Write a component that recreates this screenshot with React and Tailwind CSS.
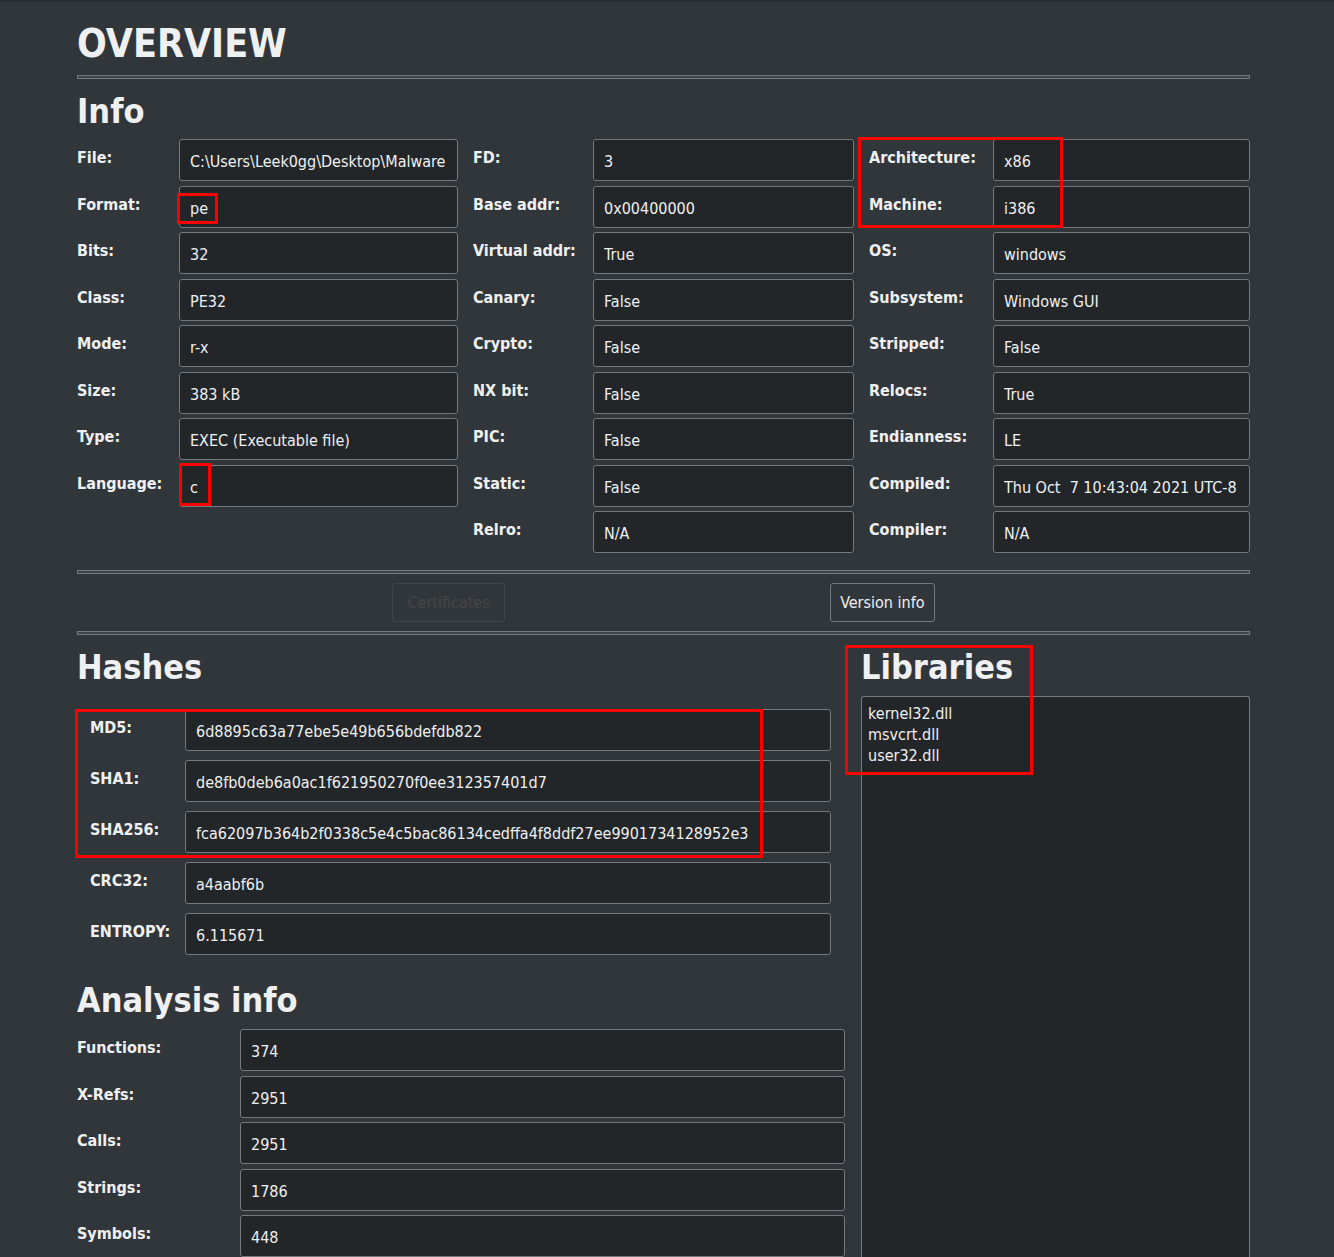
import React, { useId } from "react";

const infoColumns = [
  {
    labelWidth: "w-[102px]",
    rows: [
      ["File:", "C:\\Users\\Leek0gg\\Desktop\\Malware"],
      ["Format:", "pe"],
      ["Bits:", "32"],
      ["Class:", "PE32"],
      ["Mode:", "r-x"],
      ["Size:", "383 kB"],
      ["Type:", "EXEC (Executable file)"],
      ["Language:", "c"],
    ],
  },
  {
    labelWidth: "w-[120px]",
    rows: [
      ["FD:", "3"],
      ["Base addr:", "0x00400000"],
      ["Virtual addr:", "True"],
      ["Canary:", "False"],
      ["Crypto:", "False"],
      ["NX bit:", "False"],
      ["PIC:", "False"],
      ["Static:", "False"],
      ["Relro:", "N/A"],
    ],
  },
  {
    labelWidth: "w-[124px]",
    rows: [
      ["Architecture:", "x86"],
      ["Machine:", "i386"],
      ["OS:", "windows"],
      ["Subsystem:", "Windows GUI"],
      ["Stripped:", "False"],
      ["Relocs:", "True"],
      ["Endianness:", "LE"],
      ["Compiled:", "Thu Oct  7 10:43:04 2021 UTC-8"],
      ["Compiler:", "N/A"],
    ],
  },
];

const hashes = [
  ["MD5:", "6d8895c63a77ebe5e49b656bdefdb822"],
  ["SHA1:", "de8fb0deb6a0ac1f621950270f0ee312357401d7"],
  ["SHA256:", "fca62097b364b2f0338c5e4c5bac86134cedffa4f8ddf27ee9901734128952e3"],
  ["CRC32:", "a4aabf6b"],
  ["ENTROPY:", "6.115671"],
];

const analysis = [
  ["Functions:", "374"],
  ["X-Refs:", "2951"],
  ["Calls:", "2951"],
  ["Strings:", "1786"],
  ["Symbols:", "448"],
];

function Field({ label, value, labelWidth, spacing }) {
  const id = useId();
  return (
    <div className={`flex items-start ${spacing}`}>
      <label htmlFor={id} className={`${labelWidth} shrink-0 pt-[7px] font-bold leading-6 whitespace-nowrap`}>
        {label}
      </label>
      <input
        id={id}
        type="text"
        readOnly
        defaultValue={value}
        className="h-[42px] min-w-0 flex-1 rounded-[3px] border border-[#76797c] bg-[#232629] pt-0.5 pr-2 pl-[10px] outline-none"
      />
    </div>
  );
}

function Rule() {
  return <hr className="h-1 border border-[#76797c] bg-[#3f4449]" />;
}

function Highlight({ className }) {
  return <div aria-hidden="true" className={`pointer-events-none absolute border-3 border-[#fb0000] ${className}`} />;
}

const compact = "not-last:odd:pb-[5px] not-last:even:pb-1";

export default function App() {
  return (
    <main className="min-h-screen border-t-2 border-[#292d31] bg-[#31363b] pr-[84px] pl-[77px] font-['DejaVu_Sans_Condensed','Noto_Sans',sans-serif] text-[16px] text-[#eff0f1]">
      <h1 className="pt-[18px] pb-[7px] text-[39px] leading-[48px] font-bold">OVERVIEW</h1>
      <Rule />

      <h2 className="pt-3 pb-2 text-[34px] leading-10 font-bold">Info</h2>
      <section className="grid grid-cols-3 items-start gap-[15px]">
        {infoColumns.map((column, i) => (
          <div key={i} className="relative">
            <div>
              {column.rows.map(([label, value]) => (
                <Field key={label} label={label} value={value} labelWidth={column.labelWidth} spacing={compact} />
              ))}
            </div>
            {i === 0 && <Highlight className="top-[54px] left-[100px] h-[31px] w-[41px]" />}
            {i === 0 && <Highlight className="top-[324px] left-[102px] h-[43px] w-8" />}
            {i === 2 && <Highlight className="-top-[2px] -left-[11px] h-[91px] w-[205px]" />}
          </div>
        ))}
      </section>

      <div className="pt-[17px]">
        <Rule />
      </div>
      <div className="flex justify-evenly gap-[10px] py-[9px]">
        <button type="button" disabled className="h-[39px] rounded-[3px] border border-[#454545] px-[14px] text-[#454545]">
          Certificates
        </button>
        <button type="button" className="h-[39px] rounded-[3px] border border-[#76797c] px-[9px]">
          Version info
        </button>
      </div>
      <Rule />

      <div className="grid grid-cols-[768fr_389fr] gap-4">
        <div>
          <h2 className="pt-3 pb-[22px] text-[34px] leading-10 font-bold">Hashes</h2>
          <section className="relative flex flex-col gap-[9px] pr-[14px] pl-[13px]">
            {hashes.map(([label, value]) => (
              <Field key={label} label={label} value={value} labelWidth="w-[95px]" spacing="" />
            ))}
            <Highlight className="top-0 -left-[2px] h-[149px] w-[688px]" />
          </section>

          <h2 className="pt-[25px] pb-[9px] text-[34px] leading-10 font-bold">Analysis info</h2>
          <section>
            {analysis.map(([label, value]) => (
              <Field key={label} label={label} value={value} labelWidth="w-[163px]" spacing={compact} />
            ))}
          </section>
        </div>

        <section className="relative flex flex-col">
          <h2 className="pt-3 pb-[9px] text-[34px] leading-10 font-bold">
            <label htmlFor="libraries">Libraries</label>
          </h2>
          <textarea
            id="libraries"
            readOnly
            defaultValue={"kernel32.dll\nmsvcrt.dll\nuser32.dll"}
            className="block flex-1 resize-none rounded-t-[3px] border border-b-0 border-[#76797c] bg-[#232629] px-[6px] pt-[6px] leading-[21px] outline-none"
          />
          <Highlight className="top-[10px] -left-4 h-[130px] w-[188px]" />
        </section>
      </div>
    </main>
  );
}
